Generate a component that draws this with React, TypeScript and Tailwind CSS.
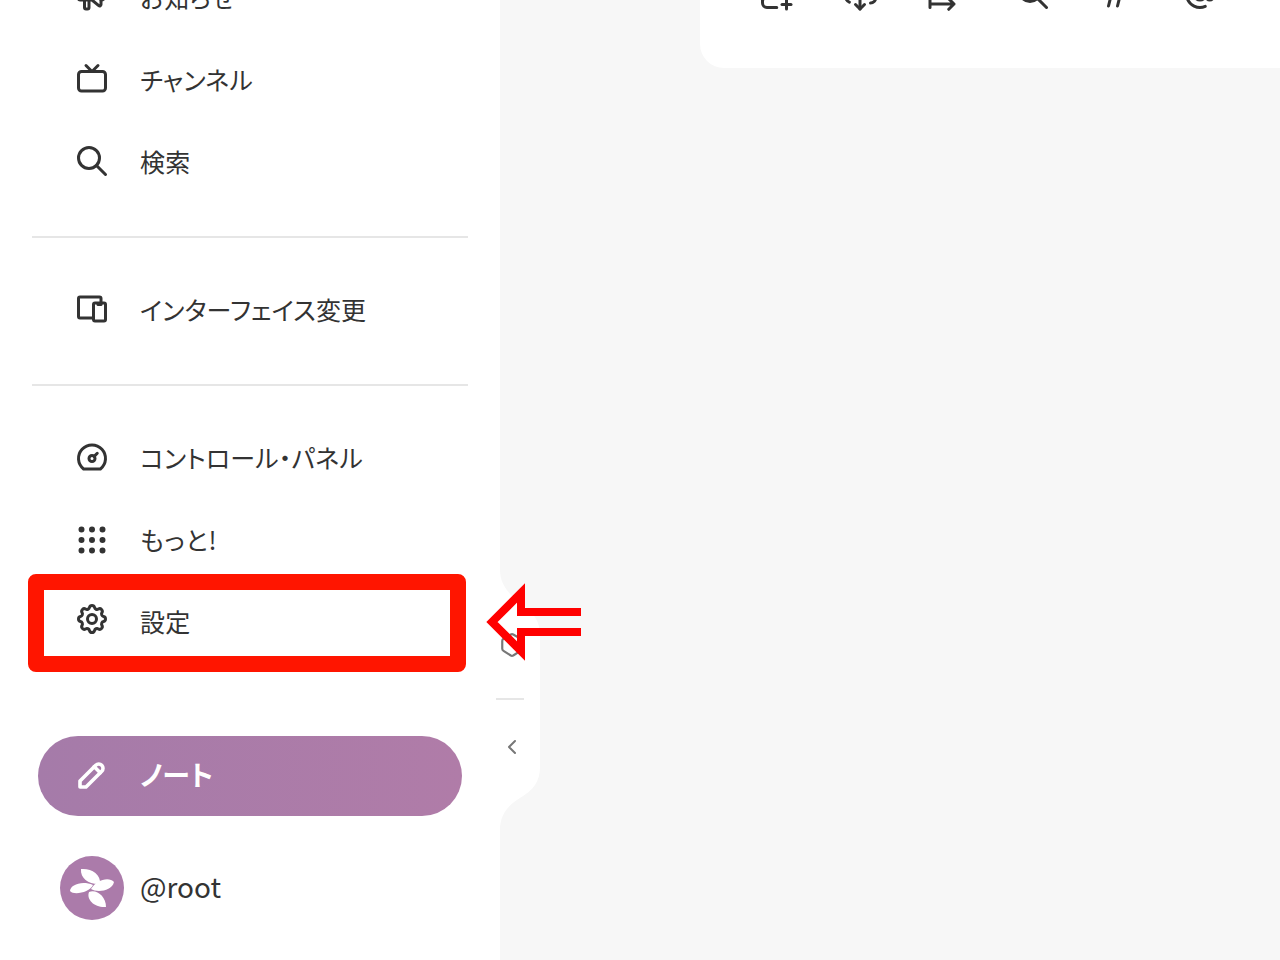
import { TbDashboard, TbDevices, TbDeviceTv, TbGridDots, TbHash, TbHexagon, TbAt, TbChevronLeft, TbPencil, TbPhotoPlus, TbSearch, TbSettings, TbSpeakerphone, TbCloudDownload } from "react-icons/tb";
import type { IconType } from "react-icons";

const font = "font-['Noto_Sans_CJK_JP','Noto_Sans',sans-serif]";

function NavItem({ icon: Icon, label, iconClass = "-translate-y-px", labelClass = "tracking-[0.2px]" }: { icon: IconType; label: string; iconClass?: string; labelClass?: string }) {
  return (
    <div className="flex h-[82px] items-center pl-[74px]">
      <Icon className={`size-[36px] shrink-0 text-[#333] ${iconClass}`} />
      <span className={`ml-[30px] text-[25px] text-[#333] [font-feature-settings:'palt'] ${labelClass}`}>{label}</span>
    </div>
  );
}

function Divider() {
  return <div className="mx-[32px] mt-[33px] mb-[31px] h-[2px] bg-[#e6e6e6]" />;
}

export default function App() {
  return (
    <div className={`relative flex h-[960px] w-[1280px] overflow-hidden bg-[#f7f7f7] ${font}`}>
      <div className="flex h-full w-[500px] shrink-0 flex-col bg-white">
        <div className="-mt-[43px]">
          <NavItem icon={TbSpeakerphone} label="お知らせ" />
        </div>
        <NavItem icon={TbDeviceTv} label="チャンネル" />
        <NavItem icon={TbSearch} label="検索" />
        <Divider />
        <NavItem icon={TbDevices} label="インターフェイス変更" />
        <Divider />
        <NavItem icon={TbDashboard} label="コントロール・パネル" />
        <NavItem icon={TbGridDots} label="もっと!" iconClass="" labelClass="tracking-[1px]" />
        <NavItem icon={TbSettings} label="設定" iconClass="-translate-y-[3px]" />
        <div className="mx-[38px] mt-[73px] flex h-[80px] items-center rounded-full bg-gradient-to-r from-[#a57ba9] to-[#b07ca8] pl-[36px] text-white">
          <TbPencil className="size-[36px] -translate-y-px [stroke-width:2.4]" />
          <span className="ml-[30px] -translate-y-[2px] text-[28px] font-bold [font-feature-settings:'palt']">ノート</span>
        </div>
        <div className="mt-[40px] flex items-center pl-[60px]">
          <div className="flex size-[64px] items-center justify-center rounded-full bg-[#ab7baa]">
            <svg viewBox="0 0 64 64" className="size-[64px]" fill="#fff">
              <path d="M21 13C31 12 41 18 40 28C30 29 20 23 21 13Z" />
              <path d="M10 35C10 29 22 24 33 29C30 36 14 40 10 35Z" />
              <path d="M54 26C49 20 36 24 31 33C37 37 52 35 54 26Z" />
              <path d="M46 51C35 52 26 44 29 36C37 33 46 41 46 51Z" />
            </svg>
          </div>
          <span className="ml-[16px] -translate-y-[2px] text-[28px] leading-none text-[#333]">@root</span>
        </div>
      </div>

      {/* bump of the sidebar with the collapse control */}
      <svg className="absolute left-[500px] top-[560px] h-[280px] w-[40px]" viewBox="0 0 40 280" fill="#fff">
        <path d="M0 0V10C0 25 10 35 20 43C34 52 40 62 40 75V207C40 222 33 230 20 238C8 245 0 255 0 270V0Z" />
      </svg>
      <div className="absolute left-[496px] top-[632px] flex w-[28px] flex-col items-center text-[#777]">
        <TbHexagon className="size-[26px] shrink-0 translate-x-[2px]" />
        <div className="mt-[40px] h-[2px] w-[28px] shrink-0 bg-[#e6e6e6]" />
        <TbChevronLeft className="mt-[35px] size-[24px] shrink-0 translate-x-[2px]" />
      </div>

      {/* post form card, scrolled off the top */}
      <div className="absolute left-[700px] -top-[12px] flex h-[80px] w-[580px] items-start rounded-bl-[24px] bg-white text-[#333]">
        <div className="-mt-[12px] flex w-full">
          <TbPhotoPlus className="ml-[58px] size-[36px]" />
          <TbCloudDownload className="ml-[48px] size-[36px]" />
          <svg viewBox="0 0 24 24" className="ml-[46px] size-[36px]" fill="none" stroke="currentColor" strokeWidth="2" strokeLinecap="round" strokeLinejoin="round">
            <path d="M4 10V21M4 18.7H20M16.5 15.2L20 18.7L16.5 22.2" />
          </svg>
          <TbSearch className="ml-[55px] size-[36px]" />
          <TbHash className="ml-[47px] size-[36px]" />
          <TbAt className="ml-[48px] size-[36px]" />
        </div>
      </div>

      {/* red annotation */}
      <div className="absolute left-[28px] top-[574px] h-[98px] w-[438px] rounded-[8px] border-[16px] border-[#ff1500]" />
      <svg className="absolute left-[479px] top-[578px] h-[90px] w-[106px]" viewBox="0 0 106 90" fill="none" stroke="#ff0000" strokeWidth="8">
        <path d="M102 34H42V15L13 44 42 73V54H102" />
      </svg>
    </div>
  );
}
